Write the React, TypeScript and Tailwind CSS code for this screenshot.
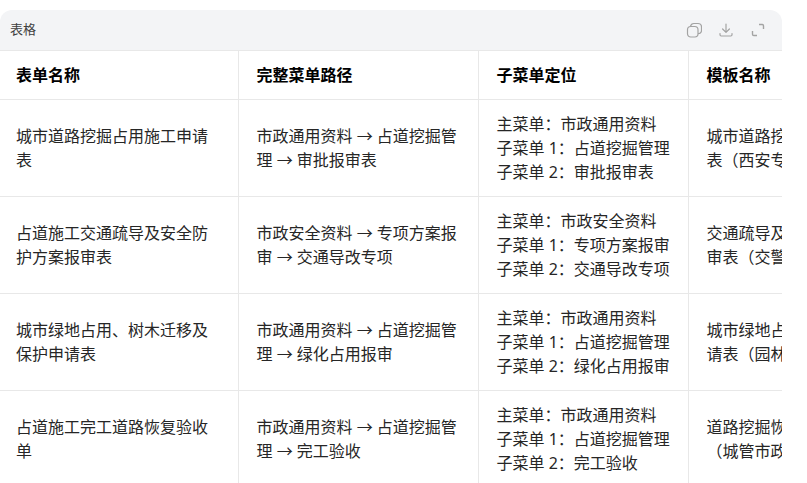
const font = { fontFamily: '"Noto Sans", "Noto Sans CJK SC", sans-serif' };

const C = "\uFF1A";
const L = "\uFF08";
const R = "\uFF09";

const rows = [
  { name: "城市道路挖掘占用施工申请表", path: "市政通用资料 → 占道挖掘管理 → 审批报审表", menu: [`主菜单${C}市政通用资料`, `子菜单 1${C}占道挖掘管理`, `子菜单 2${C}审批报审表`], tpl: `城市道路挖掘占用施工申请表${L}西安专用${R}` },
  { name: "占道施工交通疏导及安全防护方案报审表", path: "市政安全资料 → 专项方案报审 → 交通导改专项", menu: [`主菜单${C}市政安全资料`, `子菜单 1${C}专项方案报审`, `子菜单 2${C}交通导改专项`], tpl: `交通疏导及安全防护方案报审表${L}交警备案${R}` },
  { name: "城市绿地占用、树木迁移及保护申请表", path: "市政通用资料 → 占道挖掘管理 → 绿化占用报审", menu: [`主菜单${C}市政通用资料`, `子菜单 1${C}占道挖掘管理`, `子菜单 2${C}绿化占用报审`], tpl: `城市绿地占用及树木迁移申请表${L}园林部门${R}` },
  { name: "占道施工完工道路恢复验收单", path: "市政通用资料 → 占道挖掘管理 → 完工验收", menu: [`主菜单${C}市政通用资料`, `子菜单 1${C}占道挖掘管理`, `子菜单 2${C}完工验收`], tpl: `道路挖掘恢复验收申请表${L}城管市政部门${R}` },
];

const head = ["表单名称", "完整菜单路径", "子菜单定位", "模板名称"];

export default function App() {
  return (
    <div className="h-[483px] w-[807px] overflow-hidden bg-white pt-[10px]" style={font}>
      <div className="w-[782px] overflow-hidden rounded-t-xl">
        <div className="flex h-[40px] items-center justify-between bg-[#f3f4f6] pl-[10px] pr-[16px]">
          <span className="text-[13px] text-[#404040]">表格</span>
          <div className="flex items-center gap-[16px] text-[#a3a3a3]">
            <svg width="16" height="16" viewBox="0 0 16 16" fill="none" stroke="currentColor" strokeWidth="1.2">
              <rect x="1.5" y="4.5" width="10.5" height="10.5" rx="3.2" />
              <path d="M4.4 4.5C4.8 2.8 6 1.5 7.8 1.5h4.2c2 0 3.5 1.5 3.5 3.5v3.4c0 1.7-1.3 3-3.5 3.3" />
            </svg>
            <svg width="16" height="16" viewBox="0 0 16 16" fill="none" stroke="currentColor" strokeWidth="1.2" strokeLinecap="round" strokeLinejoin="round">
              <path d="M8 2v8.2M4.6 7 8 10.4 11.4 7M2 11.5v1.3c0 .7.5 1.2 1.2 1.2h9.6c.7 0 1.2-.5 1.2-1.2v-1.3" />
            </svg>
            <svg width="16" height="16" viewBox="0 0 16 16" fill="none" stroke="currentColor" strokeWidth="1.4" strokeLinejoin="round">
              <path d="M9 2.5h3.2c.8 0 1.3.5 1.3 1.3V7M7 13.5H3.8c-.8 0-1.3-.5-1.3-1.3V9" />
            </svg>
          </div>
        </div>
        <table className="w-[1020px] table-fixed border-collapse text-base leading-6 text-[#262626]">
          <colgroup>
            <col className="w-[238px]" />
            <col className="w-[240px]" />
            <col className="w-[210px]" />
            <col className="w-[332px]" />
          </colgroup>
          <thead>
            <tr className="h-[49px] border-y border-[#e8e8e8]">
              {head.map((h) => (
                <th key={h} className="border-l border-[#e8e8e8] pl-[18px] pr-4 text-left font-semibold text-black first:border-l-0 first:pl-4">{h}</th>
              ))}
            </tr>
          </thead>
          <tbody>
            {rows.map((r) => (
              <tr key={r.name} className="h-[97px] border-b border-[#e8e8e8]">
                <td className="px-4 py-3">{r.name}</td>
                <td className="border-l border-[#e8e8e8] py-3 pl-[18px] pr-4">{r.path}</td>
                <td className="border-l border-[#e8e8e8] py-3 pl-[18px] pr-4">
                  {r.menu.map((l) => <div key={l}>{l}</div>)}
                </td>
                <td className="border-l border-[#e8e8e8] py-3 pl-[18px] pr-[110px]">{r.tpl}</td>
              </tr>
            ))}
          </tbody>
        </table>
      </div>
    </div>
  );
}
